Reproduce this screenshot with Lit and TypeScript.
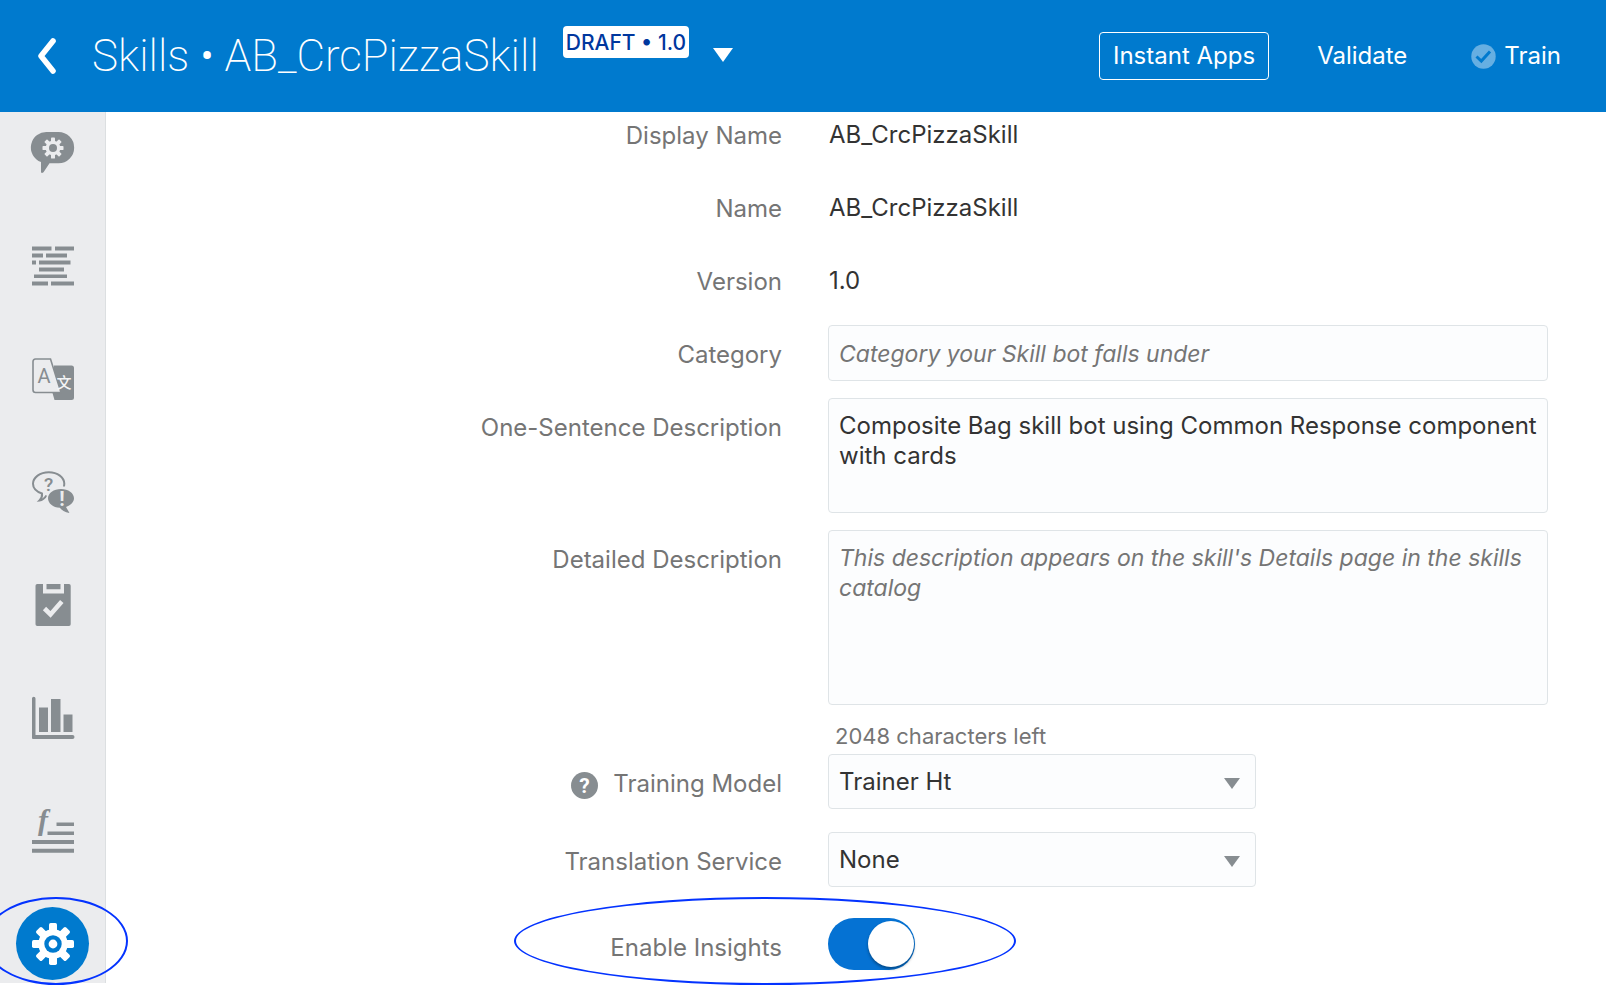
import { LitElement, html, css, svg } from "lit";
import { customElement, state } from "lit/decorators.js";

const TEETH = [0, 45, 90, 135, 180, 225, 270, 315];

/* Eight-toothed cog: r is the outer radius, hub the radius of the hole. */
const cog = (cx: number, cy: number, r: number, hub: number, fill: string, hole: string) => svg`
  <g fill=${fill}>
    <circle cx=${cx} cy=${cy} r=${r * 0.7}></circle>
    ${TEETH.map(
      (a) => svg`<rect x=${cx - r * 0.19} y=${cy - r} width=${r * 0.38} height=${r * 0.5}
        rx=${r * 0.08} transform="rotate(${a} ${cx} ${cy})"></rect>`
    )}
  </g>
  <circle cx=${cx} cy=${cy} r=${hub} fill=${hole}></circle>`;

const GREY = "#878d91";
const RAIL = "#ebecee";

const icons = {
  skill: svg`
    <path fill=${GREY} d="M15.500 0H26.500A15.500 15.500 0 0 1 26.500 31.300H17.500L11.500 40.300Q9.500 42 9 40V30A15.500 15.500 0 0 1 15.500 0Z"></path>
    ${cog(21, 16, 10.5, 4, RAIL, GREY)}`,
  flow: svg`
    <path fill=${GREY} d="M0 1.500h19.500v4H0zM23 1.500h19v4H23zM0 8.500h11v4H0zM14 8.500h21v4H14zM0 15.500h4v4H0zM7 15.500h31.500v4H7zM7 22.500h25v4H7zM2 29.500h33v3.500H2zM0 36.500h16v4H0zM19 36.500h23v4H19z"></path>`,
  languages: svg`
    <path fill=${GREY} d="M22 7.500H39.500a2.500 2.500 0 0 1 2.500 2.500V39.500a2.500 2.500 0 0 1-2.500 2.500H22.500L20.500 35Z"></path>
    <path fill=${RAIL} stroke=${GREY} stroke-width="1.600" d="M3.500 1H18.500L29 34.500H3.500A2.600 2.600 0 0 1 1 32V3.500A2.600 2.600 0 0 1 3.500 1Z"></path>
    <text class="glyph" x="12" y="25" font-size="20" fill=${GREY}>A</text>
    <text class="glyph cjk" x="32" y="30" font-size="15" fill="#f4f5f6">文</text>`,
  qna: svg`
    <path fill="none" stroke=${GREY} stroke-width="2" d="M14.500 24.500 Q11.500 29 7.500 29.500 Q10.500 26.500 10 22.500 C4 20.500 1 17 1 12.800 C1 6.500 8 1.200 16.800 1.200 S32.300 6.500 32.300 12.800 L32 15.500"></path>
    <ellipse cx="29" cy="27.500" rx="14.500" ry="11.500" fill=${RAIL}></ellipse>
    <path fill=${GREY} d="M29 18C36.200 18 42 22.200 42 27.300C42 31.200 38.500 34.400 34 36L37.500 42C32.500 41.500 29.500 39 27.800 36.800C21 36.600 16 32.400 16 27.300C16 22.200 21.800 18 29 18Z"></path>
    <text class="glyph medium" x="16.500" y="19.500" font-size="19" fill=${GREY}>?</text>
    <text class="glyph bold" x="30" y="34.500" font-size="20" fill=${RAIL}>!</text>`,
  quality: svg`
    <path fill=${GREY} d="M5 0H7.500V9.500H28.500V0H33.500A1.800 1.800 0 0 1 35.200 1.800V40.200A1.800 1.800 0 0 1 33.500 42H1.800A1.800 1.800 0 0 1 0 40.200V1.800A1.800 1.800 0 0 1 1.800 0ZM11 0H25V5.300H11Z" transform="translate(3.500 0)"></path>
    <path fill="none" stroke=${RAIL} stroke-width="4.600" d="M12.500 24.500L18.500 30.500L29.800 17.500"></path>`,
  insights: svg`
    <path fill=${GREY} d="M0 1.500A1.700 1.700 0 0 1 3.500 1.500V38H40.500A1.800 1.800 0 0 1 40.500 42H1A1 1 0 0 1 0 41ZM7 10.500h9V35H7zM19 2h9.500V35H19zM31.500 17.500h9V35h-9z"></path>`,
  functions: svg`
    <text class="glyph script" x="11" y="20" font-size="30" fill=${GREY}>f</text>
    <path fill=${GREY} d="M24.500 12.500H42v3.500H24.500zM15.500 21.500H42V25H15.500zM0 30h42v4H0zM0 38.700h42v4H0z"></path>`,
  settings: svg`
    ${cog(21, 21, 21, 8.7, "#fff", "#007ace")}
    <circle cx="21" cy="21" r="4.400" fill="#fff"></circle>`,
};

const NAV: { key: keyof typeof icons; label: string }[] = [
  { key: "skill", label: "Intents" },
  { key: "flow", label: "Flows" },
  { key: "languages", label: "Languages" },
  { key: "qna", label: "Q&A" },
  { key: "quality", label: "Quality" },
  { key: "insights", label: "Insights" },
  { key: "functions", label: "Components" },
  { key: "settings", label: "Settings" },
];

@customElement("app-root")
export class AppRoot extends LitElement {
  @state() private active = "settings";
  @state() private insightsOn = true;

  static styles = css`
    :host {
      display: block;
      min-height: 100vh;
      overflow: hidden;
      background: #fff;
      color: #333;
      font: 400 24px/30px Inter, "Liberation Sans", sans-serif;
    }
    *, *::before, *::after { box-sizing: border-box; }
    button, input, select, textarea { font: inherit; color: inherit; margin: 0; }
    button { background: none; border: 0; padding: 0; cursor: pointer; }

    .topbar {
      position: relative;
      z-index: 1;
      display: flex;
      align-items: center;
      height: 112px;
      padding: 0 45px 0 37px;
      background: #007ace;
      color: #fff;
    }
    .back { display: flex; margin-right: 36px; }
    .title {
      margin: 0;
      font-family: Roboto, Inter, sans-serif;
      font-size: 44px;
      line-height: 56px;
      font-weight: 200;
      white-space: nowrap;
    }
    .badge {
      margin: 0 24px 28px;
      padding: 1px 3px 0;
      border-radius: 4px;
      background: #fff;
      color: #00379e;
      font-size: 21px;
      line-height: 31px;
      font-weight: 500;
      white-space: nowrap;
    }
    .switcher { display: flex; padding-bottom: 2px; }
    .actions { display: flex; align-items: center; margin-left: auto; gap: 48px; }
    .action { display: flex; align-items: center; gap: 8px; white-space: nowrap; }
    .outlined { height: 48px; padding: 0 13px; border: 1px solid #fff; border-radius: 4px; }
    .train { margin-left: 16px; }

    .body { display: flex; align-items: stretch; }
    .rail {
      display: flex;
      flex-direction: column;
      gap: 40px;
      flex: none;
      width: 106px;
      padding: 4px 16px 3px;
      border-right: 1px solid #dcdfe1;
      background: #ebecee;
    }
    .nav {
      position: relative;
      display: flex;
      align-items: center;
      justify-content: center;
      width: 73px;
      height: 73px;
      border-radius: 50%;
    }
    .nav svg { overflow: visible; }
    .nav.active { background: #007ace; }
    .nav.active::after {
      content: "";
      position: absolute;
      left: -32px;
      top: -10px;
      width: 144px;
      height: 88px;
      border: 2px solid #0433ff;
      border-radius: 50%;
      pointer-events: none;
    }
    .glyph { text-anchor: middle; font-family: Roboto, sans-serif; }
    .medium { font-weight: 500; }
    .bold { font-weight: 700; }
    .cjk { font-family: "Noto Sans CJK SC", sans-serif; font-weight: 500; }
    .script { font-family: "Liberation Serif", serif; font-style: italic; font-weight: 700; }

    .form { flex: 1; min-width: 0; margin-top: -6px; padding-right: 58px; }
    .group { display: grid; gap: 17px; }
    .choices { margin-top: 4px; gap: 23px; }
    .toggles { margin-top: 31px; }
    .row { display: grid; grid-template-columns: 169fr 180fr; column-gap: 46px; }
    .label {
      display: flex;
      align-items: center;
      justify-content: flex-end;
      height: 45px;
      padding-top: 15px;
      gap: 15px;
      color: #757575;
      white-space: nowrap;
    }
    .help { display: flex; padding-top: 3px; }
    .field { position: relative; min-width: 0; }
    .value { height: 56px; padding: 14px 1px 12px; }
    .box {
      display: block;
      width: 100%;
      padding: 12px 1px 12px 10px;
      border: 1px solid #dfe4e7;
      border-radius: 4px;
      background: #fcfdfe;
      outline: none;
      resize: none;
    }
    .box::placeholder { color: #757575; font-size: 23px; font-style: italic; opacity: 1; }
    .line { height: 56px; }
    .short { height: 115px; }
    .long { height: 175px; }
    .counter { padding: 17px 7px 0; font-size: 22px; line-height: 28px; color: #757575; }
    .picker { position: relative; max-width: 428px; }
    .picker .box { height: 55px; appearance: none; }
    .caret { position: absolute; right: 16px; top: 24px; pointer-events: none; }
    .switch {
      appearance: none;
      display: flex;
      align-items: center;
      width: 87px;
      height: 52px;
      padding: 0 1px;
      border-radius: 26px;
      background: #a5acb0;
      cursor: pointer;
    }
    .switch::before {
      content: "";
      width: 46px;
      height: 46px;
      border-radius: 50%;
      background: #fff;
      box-shadow: 0 2px 3px rgba(0, 0, 0, 0.35);
    }
    .switch:checked { justify-content: flex-end; background: #0572d3; }
    .ring {
      position: absolute;
      left: -314px;
      top: -21px;
      width: 502px;
      height: 88px;
      border: 2px solid #0433ff;
      border-radius: 50%;
      pointer-events: none;
    }
  `;

  private picker(id: string, options: string[]) {
    return html`<div class="picker">
      <select class="box" id=${id}>${options.map((o) => html`<option>${o}</option>`)}</select>
      <svg class="caret" width="16" height="11" viewBox="0 0 16 11" aria-hidden="true">
        <path d="M0 0H16L8 11Z" fill=${GREY}></path>
      </svg>
    </div>`;
  }

  render() {
    return html`
      <header class="topbar">
        <button class="back" aria-label="Back">
          <svg width="19" height="36" viewBox="0 0 19 36" aria-hidden="true">
            <path d="M16 3L4 18L16 33" fill="none" stroke="#fff" stroke-width="5.600" stroke-linecap="round" stroke-linejoin="round"></path>
          </svg>
        </button>
        <h1 class="title">Skills • AB_CrcPizzaSkill</h1>
        <span class="badge">DRAFT • 1.0</span>
        <button class="switcher" aria-label="Switch version">
          <svg width="20" height="14" viewBox="0 0 20 14" aria-hidden="true"><path d="M0 0H20L10 14Z" fill="#fff"></path></svg>
        </button>
        <div class="actions">
          <button class="action outlined">Instant Apps</button>
          <button class="action">Validate</button>
          <button class="action train">
            <svg width="25" height="25" viewBox="0 0 25 25" aria-hidden="true">
              <circle cx="12.500" cy="12.500" r="12.200" fill="#66afe2"></circle>
              <path d="M5.500 12.500L10.300 17L19 7.500" fill="none" stroke="#007ace" stroke-width="3"></path>
            </svg>
            Train
          </button>
        </div>
      </header>
      <div class="body">
        <nav class="rail">
          ${NAV.map(
            (n) => html`<button
              class="nav ${this.active === n.key ? "active" : ""}"
              aria-label=${n.label}
              @click=${() => (this.active = n.key)}
            >
              <svg width="42" height="42" viewBox="0 0 42 42" aria-hidden="true">${icons[n.key]}</svg>
            </button>`
          )}
        </nav>
        <main class="form">
          <div class="group">
            <div class="row">
              <span class="label">Display Name</span>
              <div class="value">AB_CrcPizzaSkill</div>
            </div>
            <div class="row">
              <span class="label">Name</span>
              <div class="value">AB_CrcPizzaSkill</div>
            </div>
            <div class="row">
              <span class="label">Version</span>
              <div class="value">1.0</div>
            </div>
            <div class="row">
              <label class="label" for="category">Category</label>
              <input class="box line" id="category" placeholder="Category your Skill bot falls under" />
            </div>
            <div class="row">
              <label class="label" for="summary">One-Sentence Description</label>
              <textarea class="box short" id="summary" .value=${"Composite Bag skill bot using Common Response component with cards"}></textarea>
            </div>
            <div class="row">
              <label class="label" for="details">Detailed Description</label>
              <div class="field">
                <textarea class="box long" id="details" maxlength="2048" placeholder="This description appears on the skill's Details page in the skills catalog"></textarea>
                <div class="counter">2048 characters left</div>
              </div>
            </div>
          </div>
          <div class="group choices">
            <div class="row">
              <label class="label" for="model">
                <span class="help">
                  <svg width="27" height="27" viewBox="0 0 27 27" aria-hidden="true">
                    <circle cx="13.500" cy="13.500" r="13.500" fill=${GREY}></circle>
                    <text class="glyph bold" x="13.500" y="21" font-size="21" fill="#fff">?</text>
                  </svg>
                </span>
                Training Model
              </label>
              ${this.picker("model", ["Trainer Ht", "Trainer Tm"])}
            </div>
            <div class="row">
              <label class="label" for="translation">Translation Service</label>
              ${this.picker("translation", ["None"])}
            </div>
          </div>
          <div class="group toggles">
            <div class="row">
              <label class="label" for="enable">Enable Insights</label>
              <div class="field">
                <input
                  class="switch"
                  type="checkbox"
                  role="switch"
                  id="enable"
                  .checked=${this.insightsOn}
                  @change=${(e: Event) => (this.insightsOn = (e.target as HTMLInputElement).checked)}
                />
                <div class="ring"></div>
              </div>
            </div>
          </div>
        </main>
      </div>
    `;
  }
}
